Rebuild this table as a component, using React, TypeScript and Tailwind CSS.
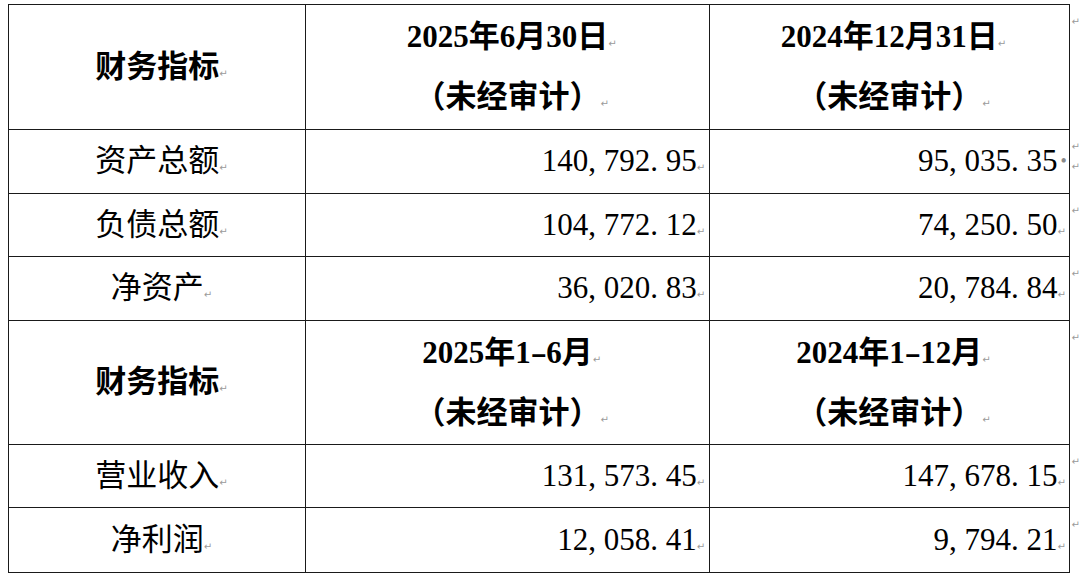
import React from "react";

const Mark = () => (
  <span className="inline-block w-0 overflow-visible whitespace-nowrap text-[10px] leading-none text-[#9a9a9a] font-['DejaVu_Sans',sans-serif] font-normal align-baseline">
    ↵
  </span>
);

const Num = ({ v, dot }: { v: string; dot?: boolean }) => (
  <span className="whitespace-nowrap">
    {v.split("").map((c, i) =>
      c === "," || c === "." ? (
        <span key={i} className="inline-block w-[0.5em] text-left">
          {c}
        </span>
      ) : (
        <span key={i}>{c}</span>
      )
    )}
    {dot ? (
      <span className="inline-block w-0 overflow-visible text-[18px] text-[#8a8a8a] relative left-[3px] -top-[4px]">•</span>
    ) : (
      <Mark />
    )}
  </span>
);

const RowMark = ({ two }: { two?: boolean }) => (
  <td className="align-top p-0 w-[8px]">
    <div className="pt-[12px] pl-[2px] flex flex-col gap-[10px] text-[10px] leading-none text-[#9a9a9a] font-['DejaVu_Sans',sans-serif]">
      <span>↵</span>
      {two && <span>↵</span>}
    </div>
  </td>
);

const cell = "border border-[#1a1a1a] p-0";

const Title = ({ t }: { t: string }) => (
  <>
    {t.split("").map((c, i) =>
      c === "-" ? (
        <span key={i} className="inline-block w-[0.5em] text-center scale-x-[1.6]">
          -
        </span>
      ) : (
        <span key={i}>{c}</span>
      )
    )}
  </>
);

const HeaderRow = ({ a, b, h }: { a: string; b: string; h: string }) => (
  <tr className={h}>
    <td className={`${cell} text-center font-bold`}>
      财务指标
      <Mark />
    </td>
    <td className={`${cell} text-center font-bold leading-[60px]`}>
      <div>
        <Title t={a} />
        <Mark />
      </div>
      <div>
        （未经审计）
        <Mark />
      </div>
    </td>
    <td className={`${cell} text-center font-bold leading-[60px]`}>
      <div>
        <Title t={b} />
        <Mark />
      </div>
      <div>
        （未经审计）
        <Mark />
      </div>
    </td>
    <RowMark />
  </tr>
);

const DataRow = ({
  label,
  a,
  b,
  h,
  dot,
}: {
  label: string;
  a: string;
  b: string;
  h: string;
  dot?: boolean;
}) => (
  <tr className={h}>
    <td className={`${cell} text-center`}>
      {label}
      <Mark />
    </td>
    <td className={`${cell} text-right pr-[12px]`}>
      <Num v={a} />
    </td>
    <td className={`${cell} text-right pr-[11px]`}>
      <Num v={b} dot={dot} />
    </td>
    <RowMark two={dot} />
  </tr>
);

export default function App() {
  return (
    <div className="w-[1080px] h-[578px] bg-white overflow-hidden pt-[4px] pl-[8px] text-black text-[31px] font-['Liberation_Serif','Noto_Sans_CJK_SC',serif]">
      <table className="border-collapse table-fixed">
        <colgroup>
          <col className="w-[299px]" />
          <col className="w-[405px]" />
          <col className="w-[361px]" />
          <col className="w-[8px]" />
        </colgroup>
        <tbody>
          <HeaderRow a="2025年6月30日" b="2024年12月31日" h="h-[125px]" />
          <DataRow label="资产总额" a="140,792.95" b="95,035.35" h="h-[64px]" dot />
          <DataRow label="负债总额" a="104,772.12" b="74,250.50" h="h-[63px]" />
          <DataRow label="净资产" a="36,020.83" b="20,784.84" h="h-[64px]" />
          <HeaderRow a="2025年1-6月" b="2024年1-12月" h="h-[124px]" />
          <DataRow label="营业收入" a="131,573.45" b="147,678.15" h="h-[63px]" />
          <DataRow label="净利润" a="12,058.41" b="9,794.21" h="h-[65px]" />
        </tbody>
      </table>
    </div>
  );
}
